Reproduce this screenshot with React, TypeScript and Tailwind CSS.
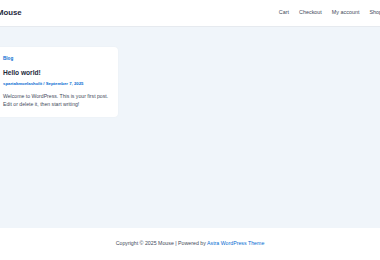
import React from "react";

export default function App() {
  return (
    <div className="w-[380px] h-[260px] overflow-hidden bg-white flex flex-col" style={{ fontFamily: '"Liberation Sans", Arial, sans-serif' }}>
      <header className="h-[27px] shrink-0 flex items-center justify-between border-b border-[#e6eaef] bg-white">
        <div className="-ml-[3px] text-[7.8px] font-bold text-[#1e293b] leading-none">Mouse</div>
        <nav className="flex items-center gap-[10px] -mr-[2px] text-[5.4px] text-[#3f4a5a] leading-none">
          <span>Cart</span>
          <span>Checkout</span>
          <span>My account</span>
          <span>Shop</span>
        </nav>
      </header>
      <main className="h-[201px] shrink-0 bg-[#f0f5fa] pt-[20px]">
        <article className="-ml-[4px] w-[122px] h-[70px] bg-white rounded-[4px] pl-[7px] pt-[10px] flex flex-col shadow-[0_0_2px_rgba(0,0,0,0.04)]">
          <div className="text-[4.6px] font-bold text-[#046bd2] leading-none">Blog</div>
          <h2 className="mt-[8px] text-[6.6px] font-bold text-[#1e293b] leading-none">Hello world!</h2>
          <div className="mt-[6px] text-[4.3px] font-bold text-[#046bd2] leading-none">spartakmoelasholit / September 7, 2025</div>
          <p className="mt-[6px] text-[5.15px] text-[#3f4a5a] leading-[8px]">
            Welcome to WordPress. This is your first post.
            <br />
            Edit or delete it, then start writing!
          </p>
        </article>
      </main>
      <footer className="flex-1 bg-white flex items-center justify-center pb-[1px]">
        <p className="text-[5.25px] text-[#3f4a5a] leading-none">
          Copyright © 2025 Mouse | Powered by <span className="text-[#046bd2]">Astra WordPress Theme</span>
        </p>
      </footer>
    </div>
  );
}
